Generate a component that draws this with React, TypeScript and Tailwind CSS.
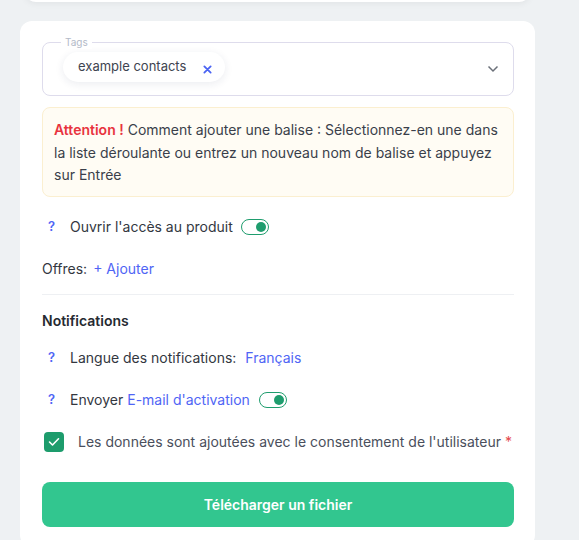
import React from "react";

function Toggle() {
  return (
    <span className="relative inline-flex h-[16px] w-[28px] items-center rounded-full border-[1.5px] border-[#1f9d6e] bg-white">
      <span className="absolute right-[2px] h-[10px] w-[10px] rounded-full bg-[#1f9d6e]" />
    </span>
  );
}

function Q() {
  return <span className="w-[28px] pl-[6px] text-[13px] font-semibold text-[#4f65f5]">?</span>;
}

export default function App() {
  return (
    <div
      className="min-h-[540px] w-[579px] overflow-hidden bg-[#eef1f3] pl-[20px] pr-[44px] text-[14px] text-[#33373f]"
      style={{ fontFamily: "Inter, 'Noto Sans', sans-serif" }}
    >
      <div className="mx-[4px] -mt-[38px] h-[40px] rounded-b-xl bg-white shadow-[0_2px_6px_rgba(0,0,0,0.05)]" />
      <div className="mt-[19px] rounded-xl bg-white pb-[20px] pl-[22px] pr-[21px] pt-[21px]">
        {/* Tags */}
        <div className="relative flex h-[54px] items-center rounded-lg border border-[#dedcec] pl-[20px] pr-[14px]">
          <span className="absolute -top-[8px] left-[18px] bg-white px-[4px] text-[10px] leading-[14px] text-[#b3bac8]">
            Tags
          </span>
          <div className="mb-[4px] flex h-[30px] items-center rounded-full bg-white pl-[15px] pr-[13px] shadow-[0_2px_8px_rgba(30,40,90,0.09)]">
            <span className="text-[13px] text-[#3e4450]">example contacts</span>
            <svg className="ml-[17px] mt-[4px]" width="9" height="9" viewBox="0 0 10 10">
              <path d="M1.5 1.5 L8.5 8.5 M8.5 1.5 L1.5 8.5" stroke="#4a63f3" strokeWidth="2" strokeLinecap="round" />
            </svg>
          </div>
          <svg className="ml-auto" width="12" height="8" viewBox="0 0 12 8">
            <path d="M1.5 1.5 L6 6 L10.5 1.5" fill="none" stroke="#6b7079" strokeWidth="1.5" />
          </svg>
        </div>

        {/* Warning */}
        <div className="mt-[11px] rounded-lg border border-[#fbefd0] bg-[#fffcf4] px-[11px] pb-[9px] pt-[11px] text-[14px] leading-[22.5px] text-[#3a3f4a]">
          <span className="font-semibold text-[#e8333e]">Attention !</span> Comment ajouter une balise : Sélectionnez-en une dans la
          liste déroulante ou entrez un nouveau nom de balise et appuyez sur Entrée
        </div>

        <div className="mt-[20px] flex h-[20px] items-center">
          <Q />
          <span>Ouvrir l'accès au produit</span>
          <span className="ml-[8px] flex">
            <Toggle />
          </span>
        </div>

        <div className="mt-[22px] flex h-[20px] items-center">
          <span>Offres:</span>
          <span className="ml-[6px] text-[#4f65f5]">+ Ajouter</span>
        </div>

        <div className="mt-[15px] h-px bg-[#eef0f3]" />

        <div className="mt-[16px] flex h-[20px] items-center font-semibold text-[#262a31]">Notifications</div>

        <div className="mt-[17px] flex h-[20px] items-center">
          <Q />
          <span>Langue des notifications:</span>
          <span className="ml-[9px] text-[#4f65f5]">Français</span>
        </div>

        <div className="mt-[22px] flex h-[20px] items-center">
          <Q />
          <span>Envoyer</span>
          <span className="ml-[4px] text-[#4f65f5]">E-mail d'activation</span>
          <span className="ml-[9px] flex">
            <Toggle />
          </span>
        </div>

        <div className="mt-[22px] flex h-[20px] items-center">
          <span className="ml-[2px] flex h-[20px] w-[20px] items-center justify-center rounded-[4px] bg-[#1d9c6c]">
            <svg width="12" height="10" viewBox="0 0 12 10">
              <path d="M1.5 5 L4.5 8 L10.5 1.8" fill="none" stroke="white" strokeWidth="1.6" strokeLinecap="round" strokeLinejoin="round" />
            </svg>
          </span>
          <span className="ml-[14px] text-[#4a4f5c]">
            Les données sont ajoutées avec le consentement de l'utilisateur <span className="text-[#e5484d]">*</span>
          </span>
        </div>

        <button className="mt-[30px] flex h-[45px] w-full items-center justify-center rounded-lg bg-[#32c68f] text-[14px] font-semibold text-white">
          Télécharger un fichier
        </button>
      </div>
    </div>
  );
}
